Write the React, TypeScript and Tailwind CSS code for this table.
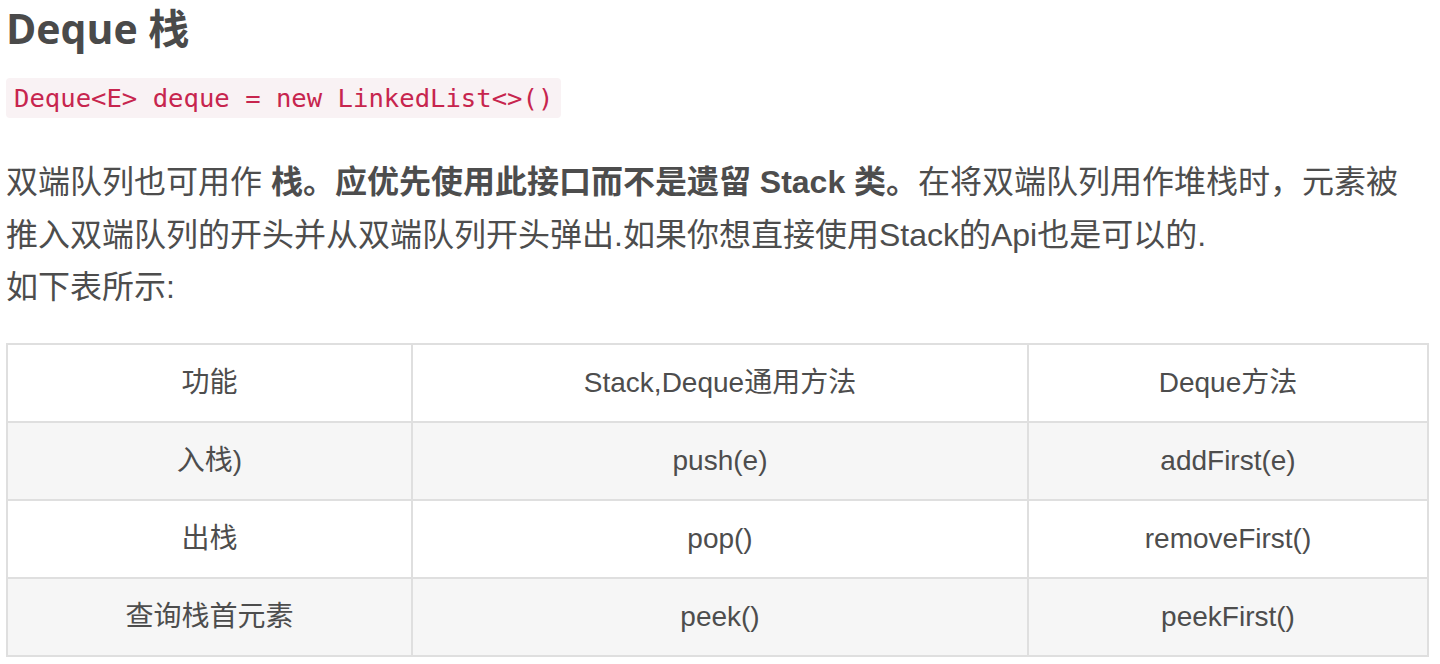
const rows = [
  ["功能", "Stack,Deque通用方法", "Deque方法"],
  ["入栈)", "push(e)", "addFirst(e)"],
  ["出栈", "pop()", "removeFirst()"],
  ["查询栈首元素", "peek()", "peekFirst()"],
];

export default function App() {
  return (
    <div className="min-h-screen bg-white pl-[6px] pr-[11px] text-[#4d4d4d] font-['Liberation_Sans','Noto_Sans_CJK_SC',sans-serif]">
      <h1 className="pt-[2px] text-[41px] leading-[52px] font-bold font-['Open_Sans','Noto_Sans_CJK_SC',sans-serif] text-[#4a4a4a]">
        Deque 栈
      </h1>

      <div className="mt-[24px]">
        <code className="inline-block rounded bg-[#f9f2f4] px-[8px] py-[4px] text-[25.6px] leading-[32px] text-[#c7254e] font-['DejaVu_Sans_Mono',monospace]">
          {"Deque<E> deque = new LinkedList<>()"}
        </code>
      </div>

      <p className="mt-[38px] text-[32px] leading-[52.5px]">
        双端队列也可用作 <b>栈。应优先使用此接口而不是遗留 Stack 类。</b>在将双端队列用作堆栈时，元素被推入双端队列的开头并从双端队列开头弹出.如果你想直接使用Stack的Api也是可以的.
        <br />
        如下表所示:
      </p>

      <table className="mt-[29px] w-full border-collapse text-[28px] text-center">
        <colgroup>
          <col className="w-[405px]" />
          <col className="w-[616px]" />
          <col />
        </colgroup>
        <tbody>
          {rows.map((r, i) => (
            <tr key={i} className={i % 2 === 1 ? "bg-[#f6f6f6]" : "bg-white"}>
              {r.map((c, j) => (
                <td key={j} className="h-[78px] border-2 border-[#dfdfdf] px-4 leading-[32px]">
                  {c}
                </td>
              ))}
            </tr>
          ))}
        </tbody>
      </table>
    </div>
  );
}
